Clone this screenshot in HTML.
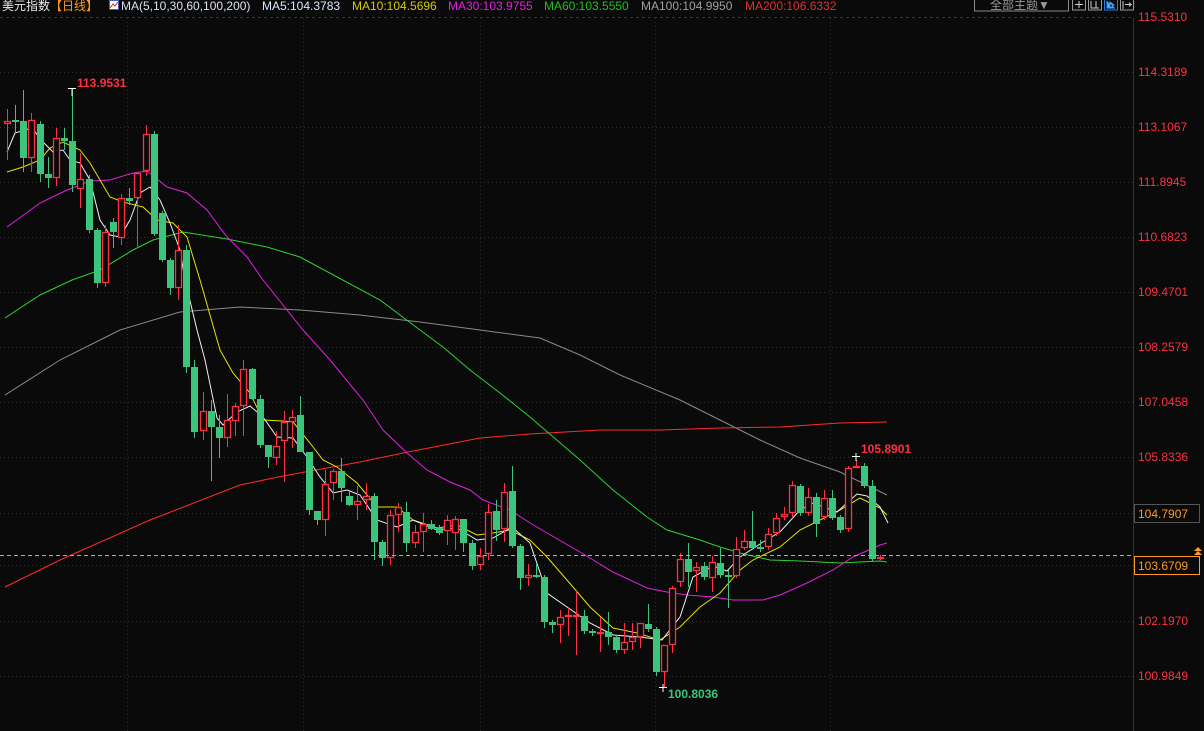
<!DOCTYPE html>
<html><head><meta charset="utf-8"><style>
html,body{margin:0;padding:0;background:#0a0a0a;width:1204px;height:731px;overflow:hidden}
svg{display:block}
text{font-family:"Liberation Sans","Noto Sans CJK SC",sans-serif}
</style></head><body>
<svg id="c" width="1204" height="731" xmlns="http://www.w3.org/2000/svg">
<rect width="1204" height="731" fill="#0a0a0a"/>
<g id="grid"></g>
<g id="mas" fill="none" stroke-width="1"></g>
<g id="cand"></g>
<line x1="0" y1="555.5" x2="1133" y2="555.5" stroke="#ff9a20" stroke-dasharray="4,3" stroke-width="1"/>
<line x1="1133.5" y1="18" x2="1133.5" y2="731" stroke="#333" stroke-width="1"/>
<g id="labels" font-size="12" fill="#ff3040"></g>
<rect x="1134.5" y="504.5" width="65" height="18" fill="#0a0a0a" stroke="#555"/>
<text x="1138" y="518" font-size="12" fill="#ff9a20">104.7907</text>
<rect x="1134.5" y="556.5" width="65" height="18" fill="#0a0a0a" stroke="#ff9a20"/>
<text x="1138" y="570" font-size="12" fill="#ff9a20">103.6709</text>
<path d="M1194 551 l4 -4 l4 4 z M1194 555 l4 -4 l4 4 z" fill="#ff9a20"/>
<text x="77" y="87" font-size="12" font-weight="bold" fill="#ff3040">113.9531</text>
<path d="M68 88.5 h8 M72 88 v8" stroke="#fff" stroke-width="1"/>
<text x="861" y="453" font-size="12" font-weight="bold" fill="#ff3040">105.8901</text>
<path d="M852 456.5 h8 M856 453 v8" stroke="#fff" stroke-width="1"/>
<text x="668" y="698" font-size="12" font-weight="bold" fill="#3cc47c">100.8036</text>
<path d="M659 687.5 h8 M663 684 v8" stroke="#fff" stroke-width="1"/>
<line x1="0" y1="17.5" x2="1133" y2="17.5" stroke="#333" stroke-dasharray="3,3"/>
<text x="2" y="10" font-size="12" fill="#e8e8e8">美元指数</text>
<text x="50" y="10" font-size="12" fill="#ff9a20">【日线】</text>
<rect x="109.5" y="0.5" width="9" height="9" fill="#fff" stroke="#4060c0"/>
<path d="M110 8 l3 -4 l2 2 l3 -4" stroke="#e02020" fill="none"/>
<text x="121" y="10" font-size="12" fill="#d8e0f0">MA(5,10,30,60,100,200)</text>
<text x="262" y="10" font-size="12" fill="#d8e8ff">MA5:104.3783</text>
<text x="352" y="10" font-size="12" fill="#d8c800">MA10:104.5696</text>
<text x="448" y="10" font-size="12" fill="#e020e0">MA30:103.9755</text>
<text x="544" y="10" font-size="12" fill="#20c020">MA60:103.5550</text>
<text x="641" y="10" font-size="12" fill="#a0a0a0">MA100:104.9950</text>
<text x="745" y="10" font-size="12" fill="#e03030">MA200:106.6332</text>
<rect x="974.5" y="-1" width="94" height="12" fill="none" stroke="#888"/>
<text x="990" y="9" font-size="12" fill="#999">全部主题▼</text>
<rect x="1072.5" y="-1" width="13" height="11" fill="none" stroke="#999"/>
<path d="M1079 1 v7 M1075 4.5 h8" stroke="#ccc"/>
<rect x="1088.5" y="-1" width="13" height="11" fill="none" stroke="#999"/>
<path d="M1091 1 v7 h8 M1096 1 v7" stroke="#ccc" fill="none"/>
<rect x="1104.5" y="-1" width="13" height="11" fill="none" stroke="#2080e0"/>
<path d="M1107 1 v7 h8 M1110 2 l4 3 l-4 3z" stroke="#40a0ff" fill="#40a0ff"/>
<rect x="1120.5" y="-1" width="13" height="11" fill="none" stroke="#999"/>
<path d="M1123 1 v8 M1125 4.5 h6 l-2 -2 M1131 4.5 l-2 2" stroke="#ccc" fill="none"/>
</svg>
<script>
var NS="http://www.w3.org/2000/svg";
function el(p,t,a){var e=document.createElementNS(NS,t);for(var k in a)e.setAttribute(k,a[k]);p.appendChild(e);return e;}
var grid=document.getElementById('grid');
var levels=[[17,'115.5310'],[72,'114.3189'],[127,'113.1067'],[182,'111.8945'],[237,'110.6823'],[292,'109.4701'],[347,'108.2579'],[402,'107.0458'],[457,'105.8336'],[513,''],[565,''],[621,'102.1970'],[676,'100.9849']];
var lab=document.getElementById('labels');
levels.forEach(function(l){
 if(l[0]>17)el(grid,'line',{x1:0,x2:1133,y1:l[0]+.5,y2:l[0]+.5,stroke:'#2e2e2e','stroke-dasharray':'1,3'});
 if(l[1]){var t=el(lab,'text',{x:1138,y:l[0]+4});t.textContent=l[1];}
});
[127,303,480,655,830].forEach(function(x){el(grid,'line',{x1:x+.5,x2:x+.5,y1:18,y2:731,stroke:'#2e2e2e','stroke-dasharray':'1,3'});});
var C=[[124,121,109,160],[120,122,105,132],[121,158,90,172],[158,120,113,172],[124,174,121,182],[174,178,157,188],[178,138,128,186],[138,141,128,150],[141,185,88,192],[189,179,153,208],[179,230,175,233],[230,283,228,288],[283,232,225,287],[222,232,218,248],[238,198,194,245],[198,201,188,205],[198,173,173,248],[171,134,125,176],[134,234,131,236],[213,260,211,262],[260,288,258,295],[288,250,225,300],[250,367,245,373],
[367,432,360,438],[431,411,392,440],[411,427,400,481],[427,438,415,458],[438,420,394,447],[421,406,403,436],[406,369,360,436],[369,399,368,400],[399,445,395,448],[445,457,445,468],[458,446,431,465],[441,422,411,482],[422,417,410,448],[415,452,396,452],[452,510,452,515],[511,520,511,525],[520,484,470,536],[483,471,469,500],[471,488,458,502],[496,505,490,506],[505,501,486,520],[500,496,483,510],[496,542,493,560],[542,558,540,566],[558,515,510,565],[515,507,503,532],[512,543,502,552],[543,532,525,548],[532,524,513,552],[524,529,520,530],[528,533,525,535],[531,520,515,545],[533,519,516,550],[519,543,519,552],[543,566,540,570],[565,556,548,570],[554,512,504,560],
[511,530,500,541],[529,492,483,542],[491,546,466,548],[546,578,544,590],[578,575,564,586],[575,576,564,578],[577,622,575,628],[622,625,620,633],[625,617,610,643],[617,615,608,636],[617,615,591,655],[616,631,610,634],[631,633,629,636],[633,632,617,652],[632,637,612,645],[637,650,635,653],[650,642,623,654],[642,637,623,650],[637,623,623,648],[624,629,604,632],[629,672,627,676],[672,645,645,687],[645,588,586,653],[582,559,553,587],[559,572,543,587],[571,567,562,592],[566,577,562,580],[578,562,556,592],[563,575,548,578],[575,576,570,608],[576,549,537,578],[548,541,530,550],[541,548,511,550],[547,547,540,552],[547,534,528,550],[533,518,513,536],[517,514,507,520],[513,485,481,518],[486,513,484,516],[513,497,488,516],[497,524,493,537],[517,498,490,520],[498,518,490,520],[517,530,515,533],[529,468,466,532],[467,466,460,468],[466,486,463,488],[486,559,480,561],[559,557,555,560]];
var g=document.getElementById('cand');
C.forEach(function(c,i){
 var x=i<60?7+i*8.15:496+(i-60)*8; x=Math.round(x);
 var up=c[1]<c[0]; var top=Math.min(c[0],c[1]),bot=Math.max(c[0],c[1]); if(bot-top<2)bot=top+2;
 var col=up?'#ff3040':'#3cc47c';
 el(g,'line',{x1:x+.5,x2:x+.5,y1:c[2],y2:top,stroke:col});
 el(g,'line',{x1:x+.5,x2:x+.5,y1:bot,y2:c[3],stroke:col});
 if(up)el(g,'rect',{x:x-2.5,y:top+.5,width:6,height:bot-top-1,fill:'#0a0a0a',stroke:col,'stroke-width':1.3});
 else el(g,'rect',{x:x-3,y:top,width:7,height:bot-top,fill:col});
});
var mas=document.getElementById('mas');
function pl(col,pts){el(mas,'polyline',{points:pts,stroke:col});}
pl('#8a8a8a','5,395 60,360 120,330 180,312 240,307 300,310 360,315 420,322 480,330 540,338 580,355 620,375 680,400 720,420 760,440 800,458 840,472 887,495');
pl('#ff2a2a','5,587 60,560 150,520 240,485 283,476 360,462 403,453 480,438 530,434 600,430 660,430 720,428 780,427 840,423 887,422');
pl('#30d030','5,318 40,295 72,280 100,270 133,250 153,240 183,232 227,239 267,247 300,257 380,300 420,330 443,347 470,370 500,393 530,417 580,460 613,490 647,517 667,530 700,540 720,547 740,553 770,560 800,561 840,563 880,561 887,562');
pl('#e020e0','7,227 40,203 67,190 90,181 110,180 133,173 147,171 167,187 187,193 207,210 227,237 247,257 263,280 303,330 330,360 363,400 383,430 407,453 427,470 450,482 470,490 483,500 510,510 530,523 547,533 580,552 613,572 647,588 667,592 687,595 713,597 733,600 763,600 780,595 807,583 833,570 853,557 880,545 887,543');
pl('#e8e000','7,172 23,167 40,160 50,148 63,142 80,150 90,163 100,180 110,197 123,202 143,207 157,220 173,223 187,237 200,280 220,350 233,373 250,393 263,420 283,421 293,422 310,443 323,460 337,467 357,483 377,507 397,507 413,520 437,528 457,525 477,535 493,533 510,530 530,540 547,557 573,587 590,607 613,628 637,633 660,640 680,627 700,607 720,593 740,570 753,560 780,547 800,530 820,520 840,510 860,498 880,508 887,515');
pl('#f0f0f0','7,152 15,133 32,128 43,142 53,152 63,150 70,160 80,163 90,180 100,220 110,235 120,237 130,220 140,193 150,187 160,200 170,223 180,250 185,280 197,330 205,360 217,418 223,425 237,412 250,406 263,417 277,437 293,438 307,457 320,477 333,493 347,490 360,495 377,520 397,527 413,520 437,530 457,528 477,540 493,538 512,527 530,543 547,593 567,607 590,623 613,635 640,637 662,640 680,617 693,577 713,566 727,571 740,557 763,542 780,532 800,510 813,503 837,512 857,494 867,496 880,507 888,523');
</script>
</body></html>
